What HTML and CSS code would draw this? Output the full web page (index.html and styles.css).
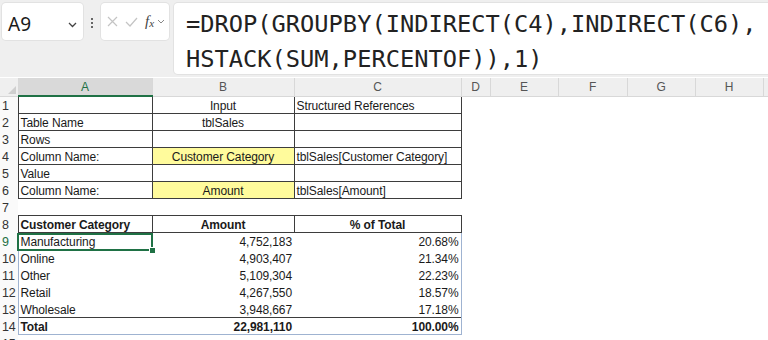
FILE: index.html
```html
<!DOCTYPE html>
<html>
<head>
<meta charset="utf-8">
<title>GROUPBY with INDIRECT</title>
<link rel="stylesheet" href="styles.css">
</head>
<body>
<div class="topbar">
  <div class="namebox">
    <span class="ref">A9</span>
    <svg class="chev" width="9" height="6" viewBox="0 0 9 6"><path d="M1 1l3.5 3.5L8 1" fill="none" stroke="#444" stroke-width="1.3"/></svg>
  </div>
  <div class="grip"><i></i><i></i><i></i></div>
  <div class="fxbox">
    <svg width="11" height="11" viewBox="0 0 11 11"><path d="M1 1l9 9M10 1l-9 9" stroke="#c4c4c4" stroke-width="1.2"/></svg>
    <svg width="13" height="10" viewBox="0 0 13 10"><path d="M1 5l4 4 7-8" fill="none" stroke="#c4c4c4" stroke-width="1.2"/></svg>
    <span class="fx">f<sub>x</sub></span>
    <svg width="8" height="5" viewBox="0 0 8 5"><path d="M1 1l3 3 3-3" fill="none" stroke="#888" stroke-width="1"/></svg>
  </div>
  <div class="formula">=DROP(GROUPBY(INDIRECT(C4),INDIRECT(C6),
HSTACK(SUM,PERCENTOF)),1)</div>
</div>

<div class="grid">
<table class="sheet">
  <colgroup>
    <col style="width:18px"><col style="width:134px"><col style="width:142px"><col style="width:167px">
    <col style="width:29px"><col style="width:68px"><col style="width:69px"><col style="width:68px"><col style="width:68px"><col style="width:40px">
  </colgroup>
  <tr class="colhead">
    <th class="corner"><span></span></th><th class="sel">A</th><th>B</th><th>C</th><th>D</th><th>E</th><th>F</th><th>G</th><th>H</th><th></th>
  </tr>
  <tr><td class="rn">1</td><td class="box"></td><td class="box c">Input</td><td class="box">Structured References</td><td></td><td></td><td></td><td></td><td></td><td></td></tr>
  <tr><td class="rn">2</td><td class="box">Table Name</td><td class="box c">tblSales</td><td class="box"></td><td></td><td></td><td></td><td></td><td></td><td></td></tr>
  <tr><td class="rn">3</td><td class="box">Rows</td><td class="box"></td><td class="box"></td><td></td><td></td><td></td><td></td><td></td><td></td></tr>
  <tr><td class="rn">4</td><td class="box">Column Name:</td><td class="box c input">Customer Category</td><td class="box">tblSales[Customer Category]</td><td></td><td></td><td></td><td></td><td></td><td></td></tr>
  <tr><td class="rn">5</td><td class="box">Value</td><td class="box"></td><td class="box"></td><td></td><td></td><td></td><td></td><td></td><td></td></tr>
  <tr><td class="rn">6</td><td class="box">Column Name:</td><td class="box c input">Amount</td><td class="box">tblSales[Amount]</td><td></td><td></td><td></td><td></td><td></td><td></td></tr>
  <tr><td class="rn">7</td><td></td><td></td><td></td><td></td><td></td><td></td><td></td><td></td><td></td></tr>
  <tr class="thead"><td class="rn">8</td><td class="first">Customer Category</td><td class="c">Amount</td><td class="c last">% of Total</td><td></td><td></td><td></td><td></td><td></td><td></td></tr>
  <tr class="data"><td class="rn active">9</td><td class="first">Manufacturing</td><td class="r">4,752,183</td><td class="r last">20.68%</td><td></td><td></td><td></td><td></td><td></td><td></td></tr>
  <tr class="data"><td class="rn">10</td><td class="first">Online</td><td class="r">4,903,407</td><td class="r last">21.34%</td><td></td><td></td><td></td><td></td><td></td><td></td></tr>
  <tr class="data"><td class="rn">11</td><td class="first">Other</td><td class="r">5,109,304</td><td class="r last">22.23%</td><td></td><td></td><td></td><td></td><td></td><td></td></tr>
  <tr class="data"><td class="rn">12</td><td class="first">Retail</td><td class="r">4,267,550</td><td class="r last">18.57%</td><td></td><td></td><td></td><td></td><td></td><td></td></tr>
  <tr class="data"><td class="rn">13</td><td class="first">Wholesale</td><td class="r">3,948,667</td><td class="r last">17.18%</td><td></td><td></td><td></td><td></td><td></td><td></td></tr>
  <tr class="total"><td class="rn">14</td><td class="first">Total</td><td class="r">22,981,110</td><td class="r last">100.00%</td><td></td><td></td><td></td><td></td><td></td><td></td></tr>
  <tr><td class="rn">15</td><td></td><td></td><td></td><td></td><td></td><td></td><td></td><td></td><td></td></tr>
</table>
<!-- active cell A9 overlay -->
<div class="cursor"><span class="handle"></span></div>
</div>
</body>
</html>
```

FILE: styles.css
```css
body {
  margin: 0;
  width: 768px;
  height: 340px;
  overflow: hidden;
  background: #fff;
  font-family: "Liberation Sans", sans-serif;
  color: #1a1a1a;
}

/* formula bar */
.topbar {
  display: flex;
  align-items: flex-start;
  height: 77px;
  background: #efefef;
  padding-top: 3px;
  box-sizing: border-box;
}
.namebox, .fxbox, .formula {
  background: #fff;
  border-radius: 4px;
  box-shadow: 0 0 0 1px #e2e2e2;
}
.namebox {
  margin-left: 2px;
  width: 81px;
  height: 37px;
  display: flex;
  align-items: center;
  justify-content: space-between;
  padding: 4px 6px 0 6px;
  box-sizing: border-box;
}
.ref {
  font-family: "Noto Sans", "Open Sans", sans-serif;
  font-size: 19px;
  color: #1a1a1a;
}
.chev { margin-top: 2px; }
.grip {
  width: 18px;
  display: flex;
  flex-direction: column;
  align-items: center;
  gap: 2px;
  padding-top: 15px;
}
.grip i {
  width: 2px;
  height: 2px;
  background: #666;
}
.fxbox {
  width: 68px;
  height: 37px;
  display: flex;
  align-items: center;
  gap: 7px;
  padding: 0 0 0 6px;
  box-sizing: border-box;
}
.fx {
  font-family: "Liberation Serif", serif;
  font-style: italic;
  font-size: 15px;
  color: #444;
  margin-right: -4px;
}
.fx sub { font-size: 11px; vertical-align: -1px; }
.formula {
  margin-left: 5px;
  flex: 1;
  height: 71px;
  margin-right: -10px;
  padding: 4px 0 0 12px;
  box-sizing: border-box;
  font-family: "DejaVu Sans Mono", monospace;
  font-size: 23.7px;
  line-height: 35px;
  white-space: pre;
  color: #222;
}

/* grid */
.grid { position: relative; }
.sheet {
  table-layout: fixed;
  border-collapse: collapse;
  width: 773px;
  margin-top: 1px;
  font-size: 12px;
  letter-spacing: -0.1px;
}
.sheet tr { height: 17px; }
.sheet tr.colhead { height: 18px; }
.sheet td, .sheet th {
  padding: 0 2px;
  overflow: hidden;
  white-space: nowrap;
  line-height: 14px;
  vertical-align: bottom;
}
.colhead th {
  background: #efefef;
  font-weight: normal;
  font-size: 12px;
  vertical-align: middle;
  color: #555;
  border-left: 1px solid #d8d8d8;
  border-bottom: 1px solid #d8d8d8;
}
.colhead th.sel {
  background: #d9d9d9;
  color: #1f7145;
  border-bottom: 2px solid #1f7145;
}
.colhead th.corner {
  border-left: none;
  position: relative;
}
.corner span {
  position: absolute;
  right: 2px;
  bottom: 2px;
  border-left: 8px solid transparent;
  border-bottom: 8px solid #cfcfcf;
}
.rn {
  background: #fafafa;
  color: #333;
  font-size: 12.5px;
  text-align: left;
  padding-left: 2px !important;
}
.rn.active { color: #1f7145; }
.c { text-align: center; }
.r { text-align: right; }
.box { border: 1px solid #3d3d3d; }
.input { background: #fffb9c; }

.thead td:not(.rn), .total td:not(.rn) { font-weight: bold; }
.thead .first, .thead .c {
  border-top: 1px solid #3d3d3d;
  border-bottom: 1px solid #3d3d3d;
  border-left: 1px solid #3d3d3d;
}
.thead .last { border-right: 1px solid #3d3d3d; }
.data .first, .total .first { border-left: 1px solid #9fb3d1; }
.data .last, .total .last { border-right: 1px solid #9fb3d1; }
.total .first, .total .r {
  border-top: 1px solid #3d3d3d;
  border-bottom: 1px solid #9fb3d1;
}

/* active cell overlay (A9) */
.cursor {
  position: absolute;
  left: 17px;
  top: 155px;
  width: 136px;
  height: 18px;
  box-sizing: border-box;
  border: 2px solid #1f7145;
}
.handle {
  position: absolute;
  right: -5px;
  bottom: -5px;
  width: 5px;
  height: 5px;
  background: #1f7145;
  border: 1px solid #fff;
}
```
